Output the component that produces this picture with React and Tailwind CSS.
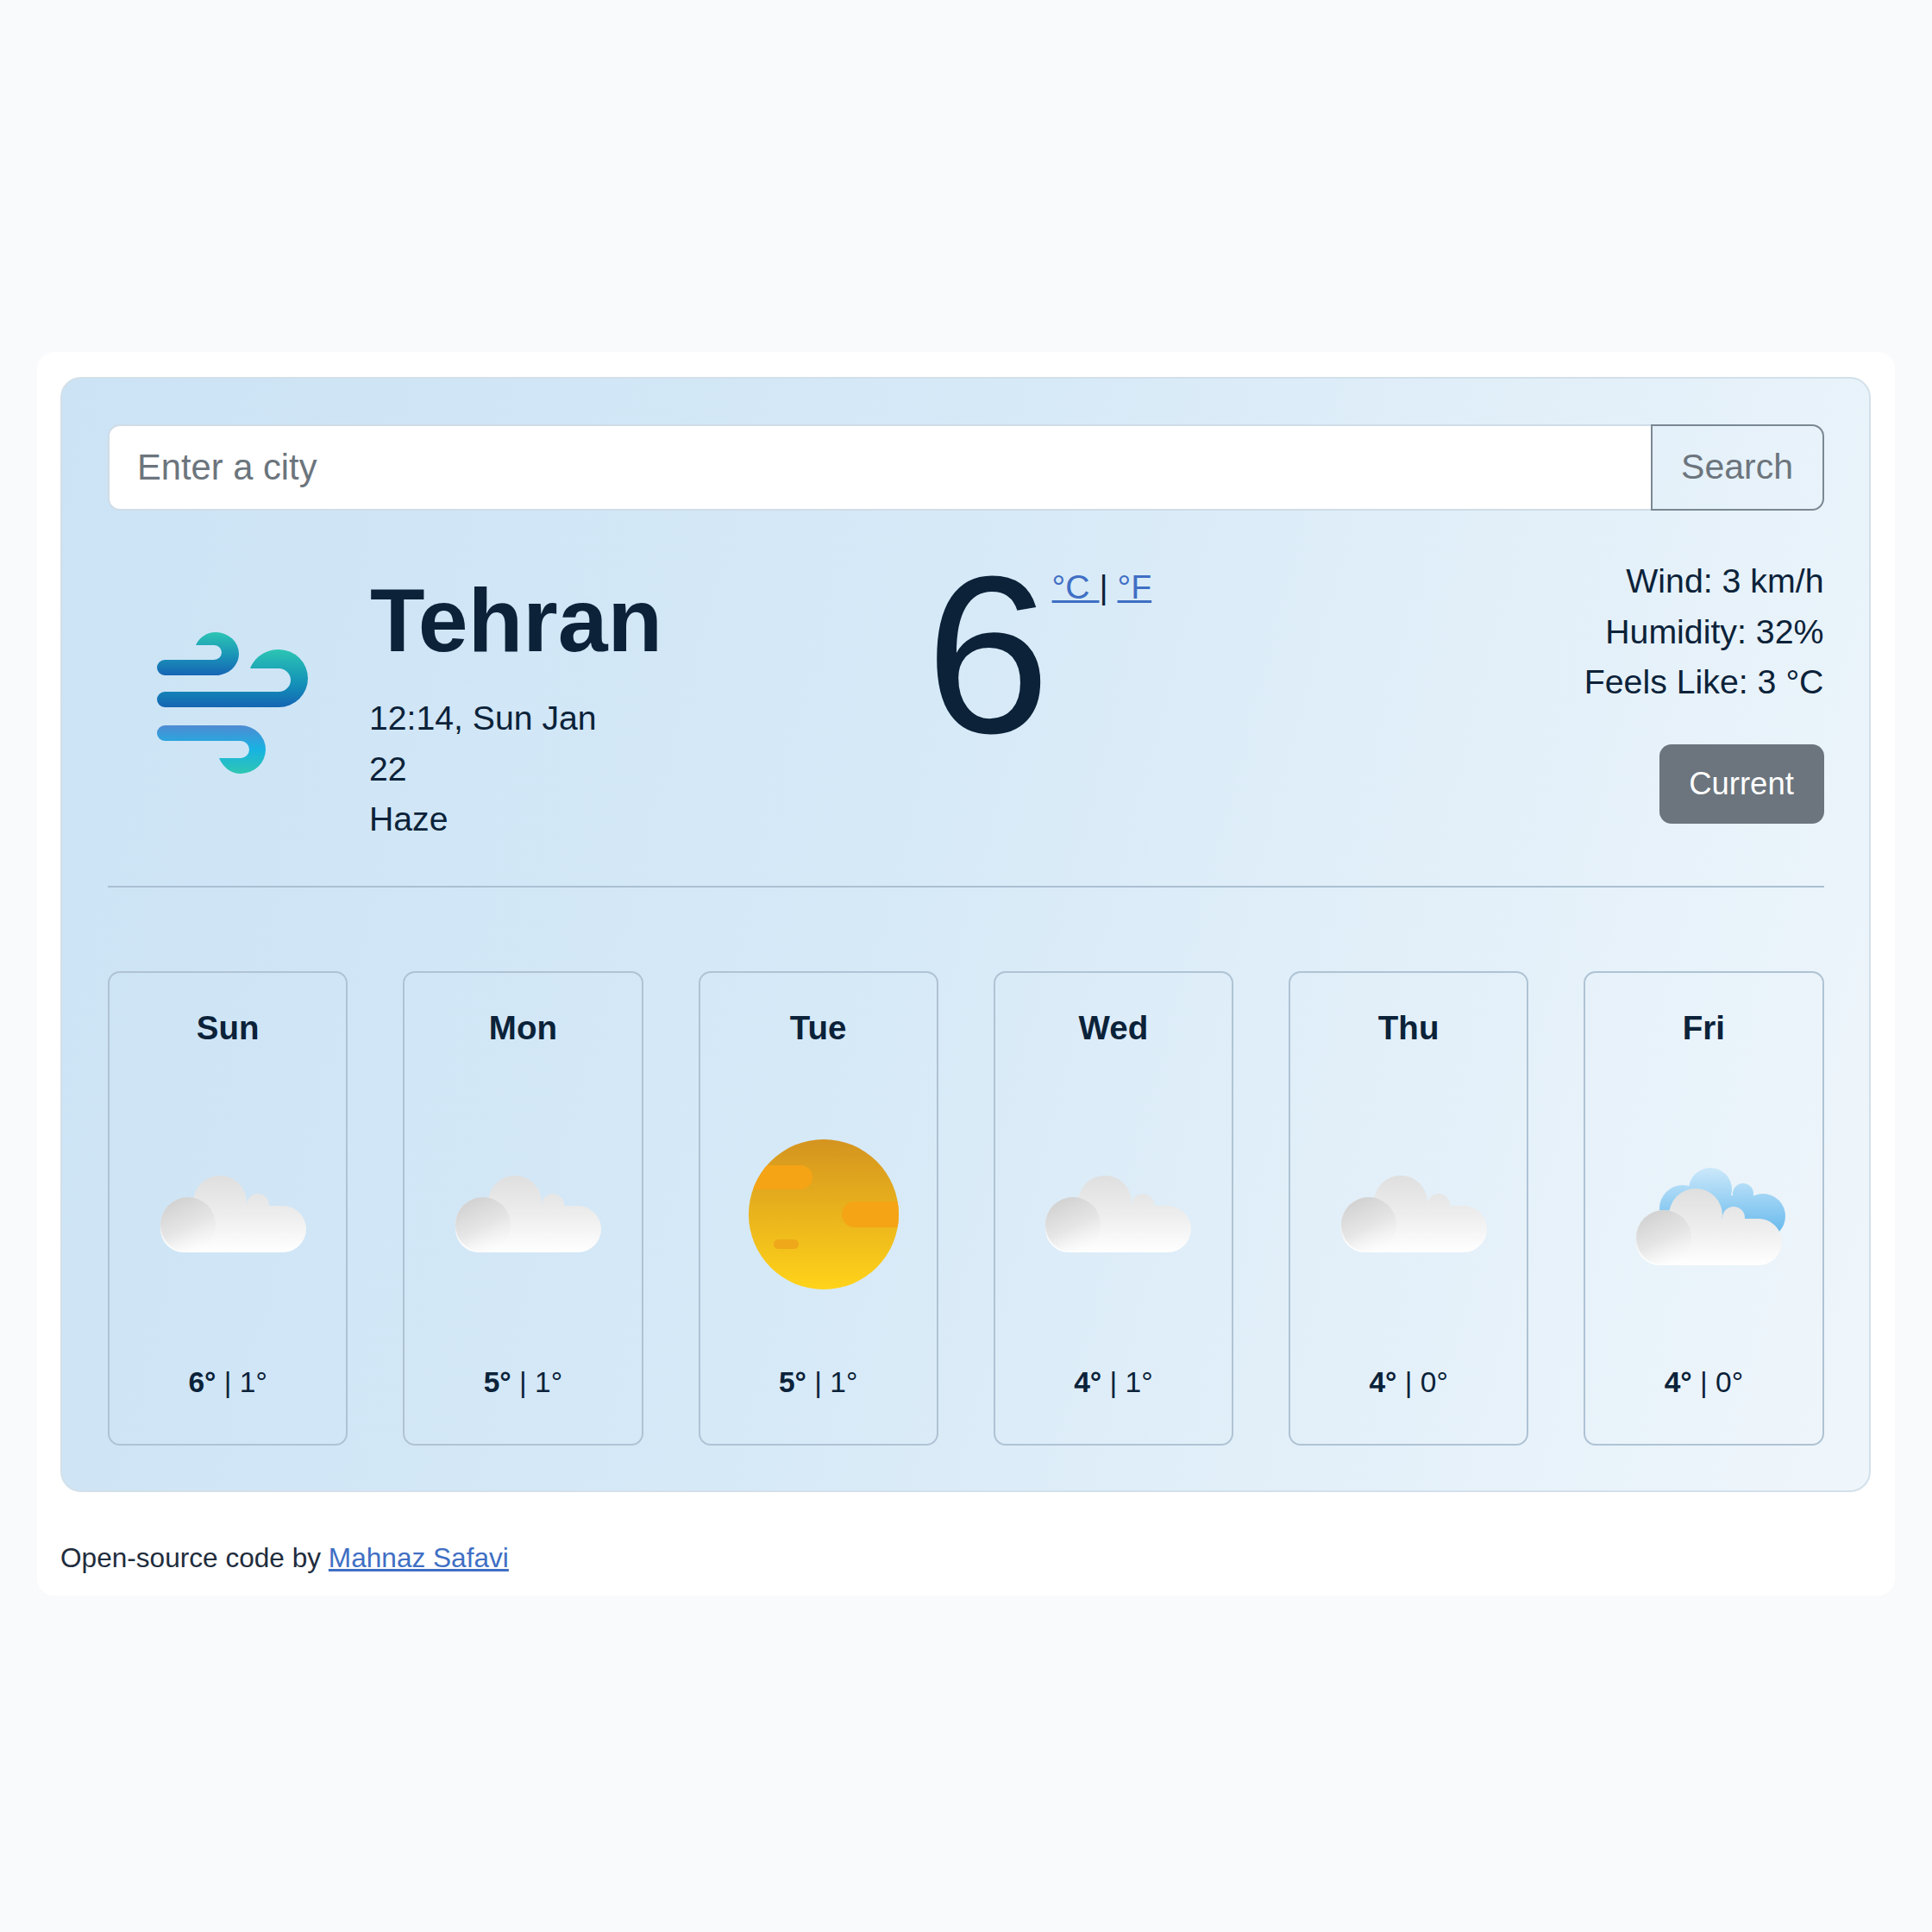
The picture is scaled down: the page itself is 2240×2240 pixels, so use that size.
import React from "react";

const days = [
  { day: "Sun", high: "6°", low: "1°", icon: "cloud" },
  { day: "Mon", high: "5°", low: "1°", icon: "cloud" },
  { day: "Tue", high: "5°", low: "1°", icon: "sun" },
  { day: "Wed", high: "4°", low: "1°", icon: "cloud" },
  { day: "Thu", high: "4°", low: "0°", icon: "cloud" },
  { day: "Fri", high: "4°", low: "0°", icon: "clouds" },
];

// wind icon next to the city name
const WindIcon = () => (
  <svg width="176" height="164" viewBox="0 0 176 164" className="block">
    <defs>
      <linearGradient id="windTop" gradientUnits="userSpaceOnUse" x1="0" y1="50" x2="0" y2="0">
        <stop offset="0" stopColor="#1665b4" />
        <stop offset="0.45" stopColor="#1a93b8" />
        <stop offset="1" stopColor="#2cc5b3" />
      </linearGradient>
      <linearGradient id="windMid" gradientUnits="userSpaceOnUse" x1="0" y1="87" x2="0" y2="20">
        <stop offset="0" stopColor="#1565b3" />
        <stop offset="0.4" stopColor="#1390b8" />
        <stop offset="1" stopColor="#2cc5b3" />
      </linearGradient>
      <linearGradient id="windLow" gradientUnits="userSpaceOnUse" x1="0" y1="108" x2="0" y2="164">
        <stop offset="0" stopColor="#4f8bd3" />
        <stop offset="0.5" stopColor="#17b3e2" />
        <stop offset="1" stopColor="#2fc6b2" />
      </linearGradient>
    </defs>
    <path
      d="M9 32H66A9 8.5 0 0 0 66 15H45C49 6 58 0 68 0A27 25 0 0 1 68 50H9A9 9 0 0 1 9 32Z"
      fill="url(#windTop)"
    />
    <path
      d="M9 69H141A14 13.5 0 0 0 141 42H108C113 29 126 20 141 20A34 33.5 0 0 1 141 87H9A9 9 0 0 1 9 69Z"
      fill="url(#windMid)"
    />
    <path
      d="M9 108H97A29 28 0 0 1 97 164C86 164 77 157 72 146H97A10 10 0 0 0 97 126H9A9 9 0 0 1 9 108Z"
      fill="url(#windLow)"
    />
  </svg>
);

const Cloud = ({ id, dy = 0 }) => (
  <g transform={`translate(-2 ${dy})`}>
    <defs>
      <linearGradient id={`${id}-body`} gradientUnits="userSpaceOnUse" x1="0" y1="42" x2="0" y2="131">
        <stop offset="0" stopColor="#dfdfdf" />
        <stop offset="0.5" stopColor="#ededed" />
        <stop offset="1" stopColor="#ffffff" />
      </linearGradient>
      <linearGradient id={`${id}-puff`} x1="0.2" y1="0" x2="0.7" y2="1">
        <stop offset="0" stopColor="#cfcfcf" />
        <stop offset="0.55" stopColor="#e2e2e2" stopOpacity="0.8" />
        <stop offset="1" stopColor="#f6f6f6" stopOpacity="0" />
      </linearGradient>
    </defs>
    <g fill={`url(#${id}-body)`}>
      <circle cx="73" cy="73" r="31" />
      <circle cx="117" cy="76" r="13" />
      <rect x="4" y="77" width="169" height="54" rx="27" />
      <circle cx="36" cy="99" r="32" />
    </g>
    <circle cx="36" cy="99" r="32" fill={`url(#${id}-puff)`} />
  </g>
);

const SunIcon = () => (
  <svg width="176" height="176" viewBox="0 0 176 176" className="block">
    <defs>
      <linearGradient id="sunFill" x1="0" y1="0" x2="0" y2="1">
        <stop offset="0" stopColor="#d4941f" />
        <stop offset="1" stopColor="#ffd31a" />
      </linearGradient>
      <clipPath id="sunClip">
        <circle cx="87" cy="87" r="87" />
      </clipPath>
    </defs>
    <circle cx="87" cy="87" r="87" fill="url(#sunFill)" />
    <g clipPath="url(#sunClip)" fill="#f5a416">
      <rect x="-6" y="30" width="80" height="28" rx="14" />
      <rect x="108" y="72" width="80" height="30" rx="15" />
      <rect x="29" y="116" width="29" height="11" rx="5.5" fill="#eea81a" />
    </g>
  </svg>
);

const CloudIcon = ({ id }) => (
  <svg width="176" height="176" viewBox="0 0 176 176" className="block">
    <Cloud id={id} />
  </svg>
);

const CloudsIcon = () => (
  <svg width="180" height="176" viewBox="0 0 180 176" className="block">
    <defs>
      <linearGradient id="blueCloud" gradientUnits="userSpaceOnUse" x1="0" y1="33" x2="0" y2="115">
        <stop offset="0" stopColor="#cbe8fa" />
        <stop offset="1" stopColor="#5fb6ec" />
      </linearGradient>
    </defs>
    <g fill="url(#blueCloud)" transform="translate(-2 0)">
      <circle cx="90" cy="58" r="25" />
      <circle cx="58" cy="80" r="27" />
      <circle cx="128" cy="63" r="12" />
      <circle cx="151" cy="89" r="26" />
      <rect x="58" y="65" width="94" height="50" />
    </g>
    <Cloud id="friFront" dy={15} />
  </svg>
);

const DayCard = ({ item }) => (
  <div className="flex flex-col items-center h-[550px] rounded-[14px] border-2 border-[#afc3d4] pt-[35px]">
    <p className="font-bold text-[38.5px] leading-[58px] text-[#0b2239]">{item.day}</p>
    <div className="mt-[100px] h-[176px] w-[176px] ml-[15px]">
      {item.icon === "sun" && <SunIcon />}
      {item.icon === "cloud" && <CloudIcon id={`cloud-${item.day}`} />}
      {item.icon === "clouds" && <CloudsIcon />}
    </div>
    <p className="mt-[81px] text-[33.5px] leading-[50px] text-[#0b2239]">
      <strong>{item.high}</strong> | {item.low}
    </p>
  </div>
);

export default function App() {
  return (
    <div className="min-h-[2240px] bg-[#f9fafc] pt-[408px] px-[43px] font-['Liberation_Sans',Arial,sans-serif] text-[#0b2239]">
      <div className="rounded-[20px] bg-white pl-[27px] pr-[28px] pt-[29px] h-[1442px]">
        <div className="h-[1293px] rounded-[24px] border-2 border-[#d3e0ea] bg-[linear-gradient(105deg,#cbe3f5,#d6e9f7_45%,#eff6fb)] pl-[53px] pr-[52.5px] pt-[53px]">
          {/* Search */}
          <div className="flex h-[100px]">
            <input
              type="search"
              placeholder="Enter a city"
              className="flex-1 min-w-0 rounded-l-[14px] border-2 border-[#d0dce6] bg-white px-[32px] text-[41.7px] text-[#212529] placeholder:text-[#6c757d] outline-none"
            />
            <button className="w-[201px] -ml-[2px] rounded-r-[14px] border-2 border-[#7a8894] text-[41px] text-[#6c757d]">
              Search
            </button>
          </div>

          {/* Current weather */}
          <div className="mt-[52px] flex h-[335px] text-[39.2px] leading-[58.6px]">
            <div className="w-[304px] pl-[57px] pt-[89px]">
              <WindIcon />
            </div>
            <div className="w-[641px]">
              <h1 className="mt-[17px] font-bold text-[104px] leading-[117px]">Tehran</h1>
              <ul className="mt-[26px] w-[300px] -ml-[1px]">
                <li>12:14, Sun Jan 22</li>
                <li>Haze</li>
              </ul>
            </div>
            <div className="flex items-start">
              <span className="-mt-[15px] ml-[3px] text-[260px] leading-[260px]">6</span>
              <span className="mt-[8px] ml-[2px]">
                <a href="#" className="text-[#3f6fc4] underline">°C </a>
                | <a href="#" className="text-[#3f6fc4] underline">°F</a>
              </span>
            </div>
            <div className="ml-auto flex flex-col items-end">
              <ul className="text-right text-[39.3px]">
                <li>Wind: 3 km/h</li>
                <li>Humidity: 32%</li>
                <li>Feels Like: 3 °C</li>
              </ul>
              <button className="mt-[43px] h-[92px] w-[191px] rounded-[14px] bg-[#6c757d] pt-[2px] text-[36.5px] text-white">
                Current
              </button>
            </div>
          </div>

          <hr className="mt-[48px] border-t-2 border-[#abc0d2]" />

          {/* Forecast */}
          <div className="mt-[97px] grid grid-cols-6 gap-[64px]">
            {days.map((item) => (
              <DayCard key={item.day} item={item} />
            ))}
          </div>
        </div>

        <p className="mt-[52px] text-[31.6px] leading-[48px] text-[#1f2d3d]">
          Open-source code by{" "}
          <a href="#" className="text-[#3f6fc4] underline">Mahnaz Safavi</a>
        </p>
      </div>
    </div>
  );
}
